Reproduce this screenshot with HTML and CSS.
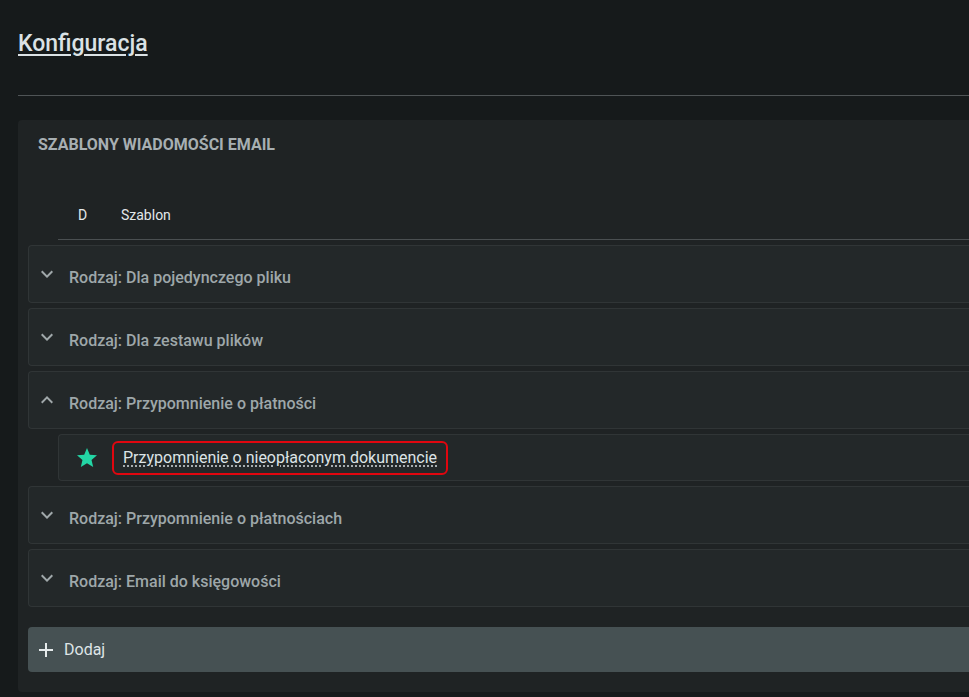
FILE: index.html
```html
<!DOCTYPE html>
<html lang="pl">
<head>
<meta charset="utf-8">
<title>Konfiguracja</title>
<link rel="stylesheet" href="styles.css">
</head>
<body>
<div class="page">
  <header class="header">
    <a class="title" href="#">Konfiguracja</a>
  </header>
  <section class="panel">
    <h2 class="panel-title">SZABLONY WIADOMOŚCI EMAIL</h2>
    <div class="table-head">
      <span class="col-d">D</span>
      <span class="col-name">Szablon</span>
    </div>
    <div class="groups">
      <div class="group">
        <svg class="chev" viewBox="0 0 24 24"><path d="M16.59 8.59L12 13.17 7.41 8.59 6 10l6 6 6-6z"/></svg>
        <span class="group-label">Rodzaj: Dla pojedynczego pliku</span>
      </div>
      <div class="group">
        <svg class="chev" viewBox="0 0 24 24"><path d="M16.59 8.59L12 13.17 7.41 8.59 6 10l6 6 6-6z"/></svg>
        <span class="group-label">Rodzaj: Dla zestawu plików</span>
      </div>
      <div class="group">
        <svg class="chev" viewBox="0 0 24 24"><path d="M12 8l-6 6 1.41 1.41L12 10.83l4.59 4.58L18 14z"/></svg>
        <span class="group-label">Rodzaj: Przypomnienie o płatności</span>
      </div>
      <div class="item">
        <svg class="star" viewBox="0 0 24 24"><path d="M12 17.27L18.18 21l-1.64-7.03L22 9.24l-7.19-.61L12 2 9.19 8.63 2 9.24l5.46 4.73L5.82 21z"/></svg>
        <a class="item-link" href="#"><span>Przypomnienie o nieopłaconym dokumencie</span></a>
      </div>
      <div class="group">
        <svg class="chev" viewBox="0 0 24 24"><path d="M16.59 8.59L12 13.17 7.41 8.59 6 10l6 6 6-6z"/></svg>
        <span class="group-label">Rodzaj: Przypomnienie o płatnościach</span>
      </div>
      <div class="group">
        <svg class="chev" viewBox="0 0 24 24"><path d="M16.59 8.59L12 13.17 7.41 8.59 6 10l6 6 6-6z"/></svg>
        <span class="group-label">Rodzaj: Email do księgowości</span>
      </div>
    </div>
    <button class="add-btn" type="button">
      <svg class="plus" viewBox="0 0 24 24"><path d="M19 13h-6v6h-2v-6H5v-2h6V5h2v6h6v2z"/></svg>
      <span>Dodaj</span>
    </button>
  </section>
</div>
</body>
</html>
```

FILE: styles.css
```css
html, body {
  margin: 0;
  padding: 0;
  overflow: hidden;
  background: #161a1b;
  font-family: Roboto, "Liberation Sans", sans-serif;
}

.page {
  width: 1100px;
  padding-left: 18px;
}

.header {
  height: 64px;
  padding-top: 31px;
  border-bottom: 1px solid #4f5456;
  box-sizing: content-box;
}

.title {
  display: block;
  font-size: 23px;
  line-height: 26px;
  font-weight: 500;
  color: #dbe2e5;
  text-decoration: underline;
  text-underline-offset: 3px;
}

.panel {
  margin-top: 24px;
  background: #1f2324;
  border-radius: 4px 0 0 4px;
  padding: 15px 0 20px 10px;
}

.panel-title {
  margin: 0 0 36px 10px;
  font-size: 16px;
  line-height: 20px;
  font-weight: 700;
  color: #a7afb2;
}

.table-head {
  margin-left: 30px;
  height: 48px;
  display: flex;
  align-items: center;
  border-bottom: 1px solid #4a4f51;
  font-size: 14px;
  color: #e3e8ea;
}

.col-d {
  width: 43px;
  padding-left: 20px;
}

.groups {
  margin-top: 5px;
  display: flex;
  flex-direction: column;
  gap: 5px;
}

.group {
  height: 56px;
  display: flex;
  align-items: center;
  gap: 10px;
  padding-left: 6px;
  background: #232829;
  border: 1px solid #303536;
  border-right: none;
  border-radius: 4px 0 0 4px;
}

.chev {
  width: 24px;
  height: 24px;
  fill: #a0a8aa;
}

.group-label {
  margin-top: 6px;
  font-size: 16px;
  font-weight: 500;
  color: #9ea7a9;
}

.item {
  margin-left: 30px;
  height: 45px;
  display: flex;
  align-items: center;
  padding-left: 16px;
  background: #232829;
  border: 1px solid #303536;
  border-right: none;
  border-radius: 4px 0 0 4px;
}

.star {
  width: 24px;
  height: 24px;
  fill: #23d6a5;
  margin-right: 13px;
}

.item-link {
  display: block;
  padding: 5px 9px 6px 9px;
  border: 2px solid #e0060f;
  border-radius: 6px;
  font-size: 16px;
  line-height: 19px;
  color: #dde4e6;
  text-decoration: underline dotted #c9d0d2;
  text-underline-offset: 3px;
}

.add-btn {
  margin-top: 20px;
  width: 100%;
  height: 45px;
  display: flex;
  align-items: center;
  gap: 6px;
  padding: 0 0 0 6px;
  background: #465153;
  border: none;
  border-radius: 4px 0 0 4px;
  font-family: inherit;
  font-size: 16px;
  color: #dfe5e7;
  cursor: pointer;
}

.plus {
  width: 24px;
  height: 24px;
  fill: #e6ebec;
}
```
